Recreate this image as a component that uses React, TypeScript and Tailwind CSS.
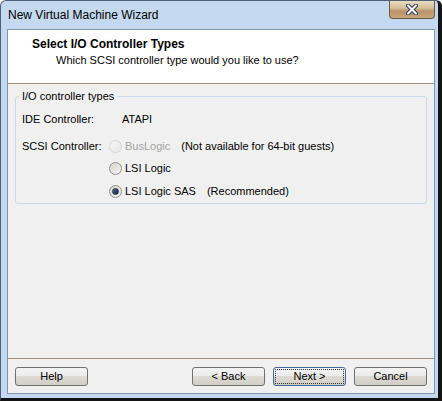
import React from "react";

const font = { fontFamily: '"Liberation Sans", Arial, sans-serif' };

const Radio: React.FC<{ checked?: boolean; disabled?: boolean }> = ({ checked, disabled }) => {
  if (disabled) {
    return (
      <div className="w-[13px] h-[13px] rounded-full border border-[#cfd3d9] bg-gradient-to-br from-[#f4f4f4] to-[#e9e9e9] flex-shrink-0" />
    );
  }
  return (
    <div className="w-[13px] h-[13px] rounded-full border border-[#8e8f8f] bg-gradient-to-br from-[#d6d3cb] to-[#f6f6f6] flex items-center justify-center flex-shrink-0">
      {checked && (
        <div className="w-[7px] h-[7px] rounded-full bg-gradient-to-br from-[#5a6f8c] to-[#10213d] border border-[#1b3150]" />
      )}
    </div>
  );
};

const Button: React.FC<{ label: string; primary?: boolean }> = ({ label, primary }) => (
  <div
    className={`w-[73px] h-[19px] rounded-[3px] border flex items-center justify-center text-[11px] text-black bg-[linear-gradient(#f3f3f3_0%,#ebebeb_45%,#dcdad2_50%,#d0cec6_100%)] ${
      primary ? "border-[#3c6b9a] p-[1px]" : "border-[#707070]"
    }`}
  >
    {primary ? (
      <div className="w-full h-full border border-dotted border-[#333] rounded-[1px] flex items-center justify-center">
        {label}
      </div>
    ) : (
      label
    )}
  </div>
);

export default function App() {
  return (
    <div
      className="w-[442px] h-[401px] flex flex-col bg-[#c4d9ef] border-l border-t border-[#4d6078] border-r-[4px] border-r-[#141414] border-b-[3px] border-b-[#141414] rounded-tl-[6px] rounded-tr-[6px] overflow-hidden"
      style={font}
    >
      {/* Title bar */}
      <div className="h-[28px] flex items-start justify-between pl-[7px] pr-[3px]">
        <div className="text-[12px] leading-[15px] text-black pt-[7px]">New Virtual Machine Wizard</div>
        <div className="w-[46px] h-[18px] rounded-b-[4px] border border-t-0 border-[#6b5a44] bg-[linear-gradient(#e9dcc2_0%,#d6bf98_40%,#b8956a_60%,#c8a77a_100%)] flex items-center justify-center">
          <svg width="12" height="11" viewBox="0 0 12 11">
            <path d="M2 1.5 L10 9.5 M10 1.5 L2 9.5" stroke="#2a3b5c" strokeWidth="4" strokeLinecap="round" />
            <path d="M2 1.5 L10 9.5 M10 1.5 L2 9.5" stroke="#ffffff" strokeWidth="2" strokeLinecap="round" />
          </svg>
        </div>
      </div>

      {/* Client area */}
      <div className="ml-[6px] w-[428px] h-[365px] border border-[#8196b5] flex flex-col bg-[#f0f0f0]">
        {/* Header */}
        <div className="h-[54px] bg-white pt-[7px] border-b border-[#a38f79] flex-shrink-0">
          <div className="pl-[24px] text-[12px] leading-[14px] font-bold text-black">Select I/O Controller Types</div>
          <div className="pl-[48px] mt-[3px] text-[11px] leading-[13px] text-black">
            Which SCSI controller type would you like to use?
          </div>
        </div>

        {/* Body */}
        <div className="flex-1 flex flex-col">
          <fieldset className="mx-[7px] mt-[6px] border border-[#c9d8ea] rounded-[3px] pl-[6px]">
            <legend className="-ml-[3px] px-[3px] text-[11px] leading-[13px] text-black">I/O controller types</legend>
            <div className="flex flex-col text-[11px] leading-[13px] text-black mt-[5px]">
              <div className="h-[22px] flex items-center">
                <div className="w-[87px]">IDE Controller:</div>
                <div className="pl-[13px]">ATAPI</div>
              </div>
              <div className="h-[22px] flex items-center mt-[5px]">
                <div className="w-[87px]">SCSI Controller:</div>
                <Radio disabled />
                <div className="ml-[3px] text-[#a3a3a3]">BusLogic</div>
                <div className="ml-[11px]">(Not available for 64-bit guests)</div>
              </div>
              <div className="h-[23px] flex items-center">
                <div className="w-[87px]" />
                <Radio />
                <div className="ml-[3px]">LSI Logic</div>
              </div>
              <div className="h-[23px] flex items-center">
                <div className="w-[87px]" />
                <Radio checked />
                <div className="ml-[3px]">LSI Logic SAS</div>
                <div className="ml-[11px]">(Recommended)</div>
              </div>
            </div>
          </fieldset>

          <div className="flex-1" />

          {/* Footer */}
          <div className="border-t border-[#a38f79] pt-[8px] pb-[7px] px-[7px] flex items-center">
            <Button label="Help" />
            <div className="flex-1" />
            <div className="flex gap-[8px]">
              <Button label="< Back" />
              <Button label="Next >" primary />
              <Button label="Cancel" />
            </div>
          </div>
        </div>
      </div>
    </div>
  );
}
